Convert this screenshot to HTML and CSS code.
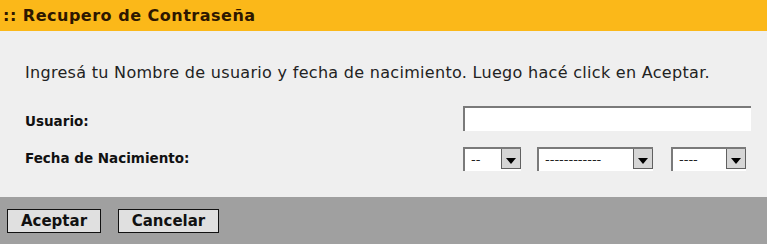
FILE: index.html
```html
<!DOCTYPE html>
<html lang="es">

<head>
    <meta charset="UTF-8">
    <title>Recupero de Contraseña</title>
    <link rel="stylesheet" href="styles.css">
</head>

<body>
    <div class="rec-box">
        <div class="rec-title">:: Recupero de Contraseña</div>
        <form class="rec-form">
            <p class="rec-info">Ingresá tu Nombre de usuario y fecha de nacimiento. Luego hacé click en Aceptar.</p>
            <div class="form-row row-user">
                <label class="form-label">Usuario:</label>
                <input class="user-input" type="text" autocomplete="off">
            </div>
            <div class="form-row row-date">
                <label class="form-label">Fecha de Nacimiento:</label>
                <div class="date-box">
                    <div class="sel sel-day"><span>--</span><i class="arrow"></i></div>
                    <div class="sel sel-month"><span>------------</span><i class="arrow"></i></div>
                    <div class="sel sel-year"><span>----</span><i class="arrow"></i></div>
                </div>
            </div>
        </form>
        <div class="rec-buttons">
            <button class="btn btn-ok">Aceptar</button>
            <button class="btn btn-cancel">Cancelar</button>
        </div>
    </div>
</body>

</html>
```

FILE: styles.css
```css
* {
    margin: 0;
    padding: 0;
    box-sizing: border-box;
}

body {
    font-family: "DejaVu Sans", Verdana, sans-serif;
    background: #efefef;
}

.rec-box {
    width: 767px;
    height: 244px;
    display: flex;
    flex-direction: column;
}

.rec-title {
    height: 31px;
    background: #fbb819;
    color: #2e1700;
    font-size: 16px;
    font-weight: bold;
    letter-spacing: 0.5px;
    line-height: 31px;
    padding-left: 3px;
}

.rec-form {
    flex: 1;
    padding: 0 16px 0 25px;
}

.rec-info {
    margin-top: 32px;
    font-size: 16px;
    letter-spacing: 0.3px;
    color: #222;
    line-height: 20px;
}

.form-row {
    display: flex;
    align-items: center;
    justify-content: space-between;
}

.row-user {
    margin-top: 23px;
}

.row-date {
    margin-top: 16px;
}

.form-label {
    font-size: 13.5px;
    font-weight: bold;
    color: #111;
    padding-top: 4px;
}

.row-date .form-label {
    padding-top: 0;
    margin-top: -3px;
}

.user-input {
    width: 288px;
    height: 25px;
    background: #fff;
    border: none;
    border-top: 2px solid #7a7a7a;
    border-left: 2px solid #7a7a7a;
    outline: none;
}

.date-box {
    display: flex;
    width: 288px;
}

.sel {
    display: flex;
    justify-content: space-between;
    height: 24px;
    background: #fff;
    border-top: 2px solid #7a7a7a;
    border-left: 2px solid #7a7a7a;
    font-size: 13px;
    line-height: 20px;
    padding-left: 6px;
    color: #222;
}

.sel span {
    padding-top: 1px;
}

.sel-day {
    width: 58px;
}

.sel-month {
    width: 116px;
    margin-left: 16px;
}

.sel-year {
    width: 75px;
    margin-left: 18px;
}

.sel .arrow {
    width: 20px;
    height: 20px;
    background: #d6d6d6;
    border: 1px solid #606060;
    border-top: none;
    position: relative;
}

.sel .arrow::after {
    content: "";
    position: absolute;
    left: 4px;
    top: 9px;
    border-left: 5px solid transparent;
    border-right: 5px solid transparent;
    border-top: 6px solid #000;
}

.rec-buttons {
    height: 47px;
    background: #a0a0a0;
    display: flex;
    align-items: center;
    gap: 17px;
    padding-left: 7px;
    padding-top: 1px;
}

.btn {
    height: 24px;
    background: #e0e0e0;
    border: 1px solid #111;
    font-family: "DejaVu Sans", Verdana, sans-serif;
    font-size: 15px;
    font-weight: bold;
    color: #111;
}

.btn-ok {
    width: 94px;
}

.btn-cancel {
    width: 101px;
}
```
